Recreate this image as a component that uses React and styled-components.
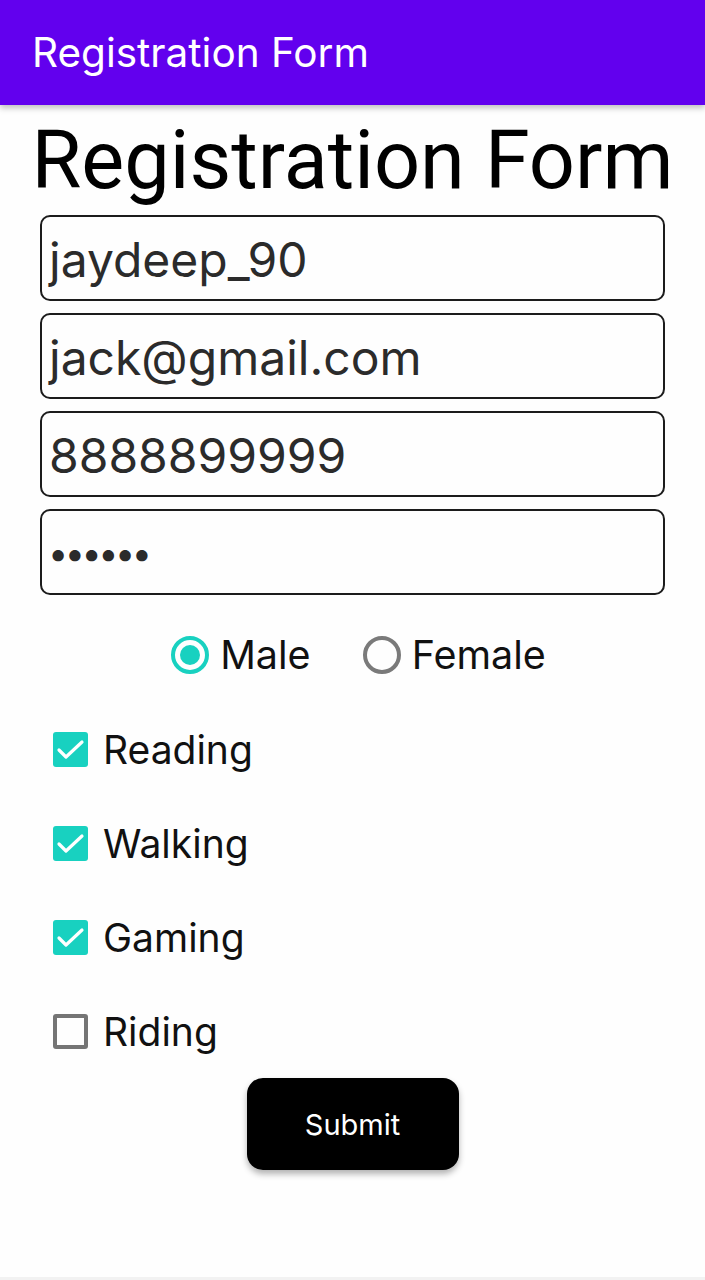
import React from "react";
import styled, { createGlobalStyle } from "styled-components";

const Global = createGlobalStyle`
  html, body { margin: 0; padding: 0; background: #fff; }
  body { font-family: Inter, Roboto, "Noto Sans", sans-serif; }
  * { box-sizing: border-box; }
`;

const Screen = styled.div`
  width: 705px;
  height: 1280px;
  display: flex;
  flex-direction: column;
  background: #fefefe;
  border-bottom: 3px solid #f2f2f2;
  overflow: hidden;
`;

const AppBar = styled.header`
  height: 105px;
  flex: none;
  background: #6200ee;
  display: flex;
  align-items: center;
  padding-left: 32px;
  box-shadow: 0 3px 6px rgba(0, 0, 0, 0.25);
  position: relative;
  z-index: 1;
`;

const AppTitle = styled.h1`
  margin: 0;
  color: #fff;
  font-family: Inter, sans-serif;
  font-size: 40.5px;
  font-weight: 400;
`;

const Content = styled.main`
  display: flex;
  flex-direction: column;
  padding: 0 40px;
`;

const Heading = styled.h2`
  margin: 8px -40px 0;
  text-align: center;
  font-family: Roboto, sans-serif;
  font-size: 81px;
  line-height: 96px;
  font-weight: 400;
  color: #000;
  white-space: nowrap;
`;

const Fields = styled.div`
  display: flex;
  flex-direction: column;
  gap: 12px;
  margin-top: 6px;
`;

const Field = styled.div`
  height: 86px;
  border: 2px solid #1c1c1c;
  border-radius: 10px;
  display: flex;
  align-items: center;
  padding-left: ${(p) => (p.$secret ? "6px" : "7px")};
  padding-top: 2px;
  font-size: ${(p) => (p.$secret ? "36px" : "48px")};
  color: #2b2b2b;
  letter-spacing: ${(p) => (p.$secret ? "-3.5px" : "0")};
`;

const RadioRow = styled.div`
  display: flex;
  justify-content: center;
  gap: 52px;
  margin-top: 36px;
  padding-left: 12px;
  height: 48px;
  align-items: center;
`;

const RadioItem = styled.label`
  display: flex;
  align-items: center;
  gap: 11px;
  font-size: 39.5px;
  color: #111;
`;

const RadioRing = styled.span`
  width: 38px;
  height: 38px;
  border-radius: 50%;
  border: 4px solid ${(p) => (p.$on ? "#18d1c0" : "#7a7a7a")};
  display: flex;
  align-items: center;
  justify-content: center;
  &::after {
    content: "";
    width: 20px;
    height: 20px;
    border-radius: 50%;
    background: ${(p) => (p.$on ? "#18d1c0" : "transparent")};
  }
`;

const Checks = styled.div`
  display: flex;
  flex-direction: column;
  gap: 46px;
  margin-top: 46px;
  padding-left: 13px;
`;

const CheckItem = styled.label`
  display: flex;
  align-items: center;
  gap: 15px;
  height: 48px;
  font-size: 39px;
  color: #111;
`;

const Box = styled.span`
  width: 35px;
  height: 35px;
  border-radius: 3px;
  background: ${(p) => (p.$on ? "#18d1c0" : "transparent")};
  border: ${(p) => (p.$on ? "none" : "4px solid #757575")};
  display: flex;
  align-items: center;
  justify-content: center;
`;

const ButtonRow = styled.div`
  display: flex;
  justify-content: center;
  margin-top: 23px;
`;

const Submit = styled.button`
  width: 212px;
  height: 92px;
  border: none;
  border-radius: 16px;
  background: #000;
  color: #fff;
  font-family: Inter, sans-serif;
  font-size: 29px;
  box-shadow: 0 4px 6px rgba(0, 0, 0, 0.3);
`;

const Check = () => (
  <svg width="35" height="35" viewBox="0 0 35 35">
    <path d="M6 18l7 7L29 10" fill="none" stroke="#fff" strokeWidth="3.2" strokeLinecap="round" strokeLinejoin="round" />
  </svg>
);

const hobbies = [
  ["Reading", true],
  ["Walking", true],
  ["Gaming", true],
  ["Riding", false],
];

export default function App() {
  return (
    <Screen>
      <Global />
      <AppBar>
        <AppTitle>Registration Form</AppTitle>
      </AppBar>
      <Content>
        <Heading>Registration Form</Heading>
        <Fields>
          <Field>jaydeep_90</Field>
          <Field>jack@gmail.com</Field>
          <Field>8888899999</Field>
          <Field $secret>••••••</Field>
        </Fields>
        <RadioRow>
          <RadioItem>
            <RadioRing $on />
            Male
          </RadioItem>
          <RadioItem>
            <RadioRing />
            Female
          </RadioItem>
        </RadioRow>
        <Checks>
          {hobbies.map(([name, on]) => (
            <CheckItem key={name}>
              <Box $on={on}>{on && <Check />}</Box>
              {name}
            </CheckItem>
          ))}
        </Checks>
        <ButtonRow>
          <Submit>Submit</Submit>
        </ButtonRow>
      </Content>
    </Screen>
  );
}
